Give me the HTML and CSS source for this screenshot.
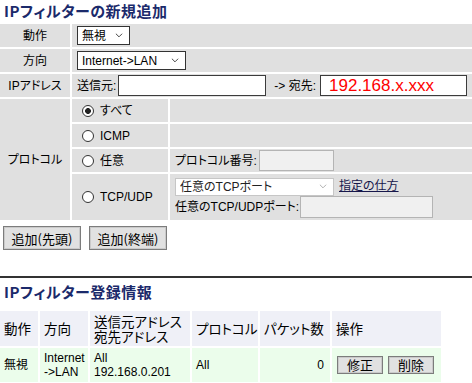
FILE: index.html
```html
<!DOCTYPE html>
<html>
    <head>
        <meta charset="utf-8">
        <link rel="stylesheet" href="styles.css">
    </head>
    <body>
        <h1 class="title">IPフィルターの新規追加</h1>

        <!-- new filter form -->
        <div class="form">
            <div class="cell label">動作</div>
            <div class="cell wide">
                <span class="pick pick-act">
                    <select><option>無視</option></select>
                    <svg class="chev" viewBox="0 0 9 5"><path d="M1 0.5 L4.5 4 L8 0.5"/></svg>
                </span>
            </div>

            <div class="cell label">方向</div>
            <div class="cell wide">
                <span class="pick pick-dir">
                    <select><option>Internet-&gt;LAN</option></select>
                    <svg class="chev" viewBox="0 0 9 5"><path d="M1 0.5 L4.5 4 L8 0.5"/></svg>
                </span>
            </div>

            <div class="cell label">IPアドレス</div>
            <div class="cell wide">
                <span>送信元:</span>
                <input class="box box-src" type="text">
                <span class="to">-&gt; 宛先:</span>
                <input class="box box-dst" type="text" value="192.168.x.xxx">
            </div>

            <div class="cell label proto">プロトコル</div>
            <div class="cell opt"><label class="choice"><input class="dot" type="radio" name="proto" checked>すべて</label></div>
            <div class="cell"></div>

            <div class="cell opt"><label class="choice"><input class="dot" type="radio" name="proto">ICMP</label></div>
            <div class="cell"></div>

            <div class="cell opt"><label class="choice"><input class="dot" type="radio" name="proto">任意</label></div>
            <div class="cell">
                <span>プロトコル番号:</span>
                <input class="box off box-num" type="text" disabled>
            </div>

            <div class="cell opt"><label class="choice"><input class="dot" type="radio" name="proto">TCP/UDP</label></div>
            <div class="cell stack">
                <div class="line">
                    <span class="pick dim pick-port">
                        <select><option>任意のTCPポート</option></select>
                        <svg class="chev" viewBox="0 0 9 5"><path d="M1 0.5 L4.5 4 L8 0.5"/></svg>
                    </span>
                    <a class="how" href="#">指定の仕方</a>
                </div>
                <div class="line">
                    <span>任意のTCP/UDPポート:</span>
                    <input class="box off box-port" type="text" disabled>
                </div>
            </div>
        </div>

        <div class="actions">
            <button class="btn btn-add">追加(先頭)</button>
            <button class="btn btn-add">追加(終端)</button>
        </div>

        <hr class="rule">

        <h2 class="title sub">IPフィルター登録情報</h2>

        <!-- registered filters -->
        <div class="list">
            <div class="head">動作</div>
            <div class="head">方向</div>
            <div class="head">送信元アドレス<br>宛先アドレス</div>
            <div class="head">プロトコル</div>
            <div class="head">パケット数</div>
            <div class="head">操作</div>

            <div class="row">無視</div>
            <div class="row">Internet<br>-&gt;LAN</div>
            <div class="row">All<br>192.168.0.201</div>
            <div class="row">All</div>
            <div class="row num">0</div>
            <div class="row ops">
                <button class="btn btn-sm">修正</button>
                <button class="btn btn-sm">削除</button>
            </div>
        </div>
    </body>
</html>
```

FILE: styles.css
```css
html, body {
    margin: 0;
    padding: 0;
}

body {
    overflow: hidden;
    background: #fff;
    color: #000;
    font-family: "Liberation Sans", "Noto Sans CJK JP", sans-serif;
    font-size: 12px;
    line-height: 16px;
    font-feature-settings: "palt";
}

.title {
    margin: 0 0 4px;
    padding: 2px 4px 0;
    font-family: "Noto Sans CJK JP", sans-serif;
    font-size: 15px;
    line-height: 18px;
    font-weight: bold;
    color: #1b2a6b;
    letter-spacing: 0.5px;
}

.sub {
    margin: 3px 0 0;
}

/* new filter form */
.form {
    display: grid;
    grid-template-columns: 70px 96px 1fr;
    grid-template-rows: repeat(6, 23px) 46px;
    gap: 2px;
    margin-top: 2px;
}

.cell {
    display: flex;
    align-items: center;
    padding: 0 5px;
    background: #e0e0e0;
    white-space: nowrap;
    min-width: 0;
}

.label {
    justify-content: center;
    padding: 0;
}

.wide {
    grid-column: span 2;
}

.proto {
    grid-row: span 4;
}

.opt {
    padding-left: 10px;
}

.stack {
    flex-direction: column;
    align-items: flex-start;
    justify-content: center;
}

.line {
    display: flex;
    align-items: center;
}

.choice {
    display: flex;
    align-items: center;
    gap: 6px;
}

.dot {
    appearance: none;
    width: 12px;
    height: 12px;
    margin: 0;
    border: 1px solid #333;
    border-radius: 50%;
    background: #fff;
    box-sizing: border-box;
}

.dot:checked {
    background: radial-gradient(circle, #222 0 2.6px, #fff 3.2px);
}

/* select boxes */
.pick {
    display: flex;
    align-items: center;
    height: 19px;
    border: 1px solid #333;
    background: #fff;
    box-sizing: border-box;
}

.pick select {
    appearance: none;
    flex: 1;
    min-width: 0;
    height: 17px;
    margin: 0;
    border: 0;
    padding: 0 0 0 4px;
    background: transparent;
    color: #000;
    font: inherit;
    outline: none;
}

.chev {
    flex: none;
    width: 8px;
    height: 5px;
    margin: 0 6px 0 2px;
    fill: none;
    stroke: #333;
    stroke-width: 1;
}

.pick-act {
    width: 53px;
}

.pick-dir {
    width: 109px;
}

.pick-port {
    width: 159px;
    height: 18px;
    margin-top: 1px;
}

.pick.dim {
    border-color: #c6c6c6;
}

.pick.dim select {
    color: #222;
}

.pick.dim .chev {
    stroke: #a8a8a8;
}

.how {
    margin-left: 5px;
    color: #16164a;
    text-decoration: underline;
}

/* text inputs */
.box {
    height: 21px;
    margin: 0;
    padding: 0 2px;
    border: 1px solid #3c3c3c;
    background: #fff;
    box-sizing: border-box;
    font: inherit;
}

.box-src {
    width: 148px;
    margin-left: 2px;
}

.to {
    margin-left: 8px;
}

.box-dst {
    width: 147px;
    margin-left: 4px;
    padding-left: 8px;
    color: #f00;
    font-size: 17px;
}

.box.off {
    border-color: #b4b4b4;
    background: #f0f0f0;
}

.box-num {
    width: 75px;
    margin-left: 2px;
}

.box-port {
    width: 133px;
    height: 22px;
    margin-left: 1px;
}

/* buttons */
.actions {
    display: flex;
    gap: 8px;
    margin-top: 6px;
    padding-left: 3px;
}

.btn {
    margin: 0;
    padding: 0;
    border: 1px solid #7c7c7c;
    background: #e1e1e1;
    box-shadow: inset 0 0 0 1px #cacaca;
    color: #000;
    font-family: "Noto Sans CJK JP", sans-serif;
    font-size: 13px;
}

.btn-add {
    width: 78px;
    height: 24px;
}

.rule {
    margin: 26px 0 0;
    border: 0;
    border-top: 2px solid #333;
    height: 0;
}

/* registered list */
.list {
    display: grid;
    grid-template-columns: 38px 48px 100px 66px 70px 109px;
    grid-template-rows: 35px 34px;
    gap: 2px;
    margin-top: 10px;
}

.head,
.row {
    display: flex;
    flex-direction: column;
    justify-content: center;
    padding: 0 4px;
    white-space: nowrap;
}

.head {
    background: #eff0f7;
    font-family: "Noto Sans CJK JP", sans-serif;
    font-size: 13.5px;
    line-height: 15px;
}

.row {
    background: #ebfdeb;
    line-height: 14px;
}

.num {
    align-items: flex-end;
    padding-right: 6px;
}

.ops {
    flex-direction: row;
    align-items: center;
    justify-content: flex-start;
    gap: 5px;
    padding-left: 5px;
}

.btn-sm {
    width: 46px;
    height: 18px;
    line-height: 14px;
}
```
